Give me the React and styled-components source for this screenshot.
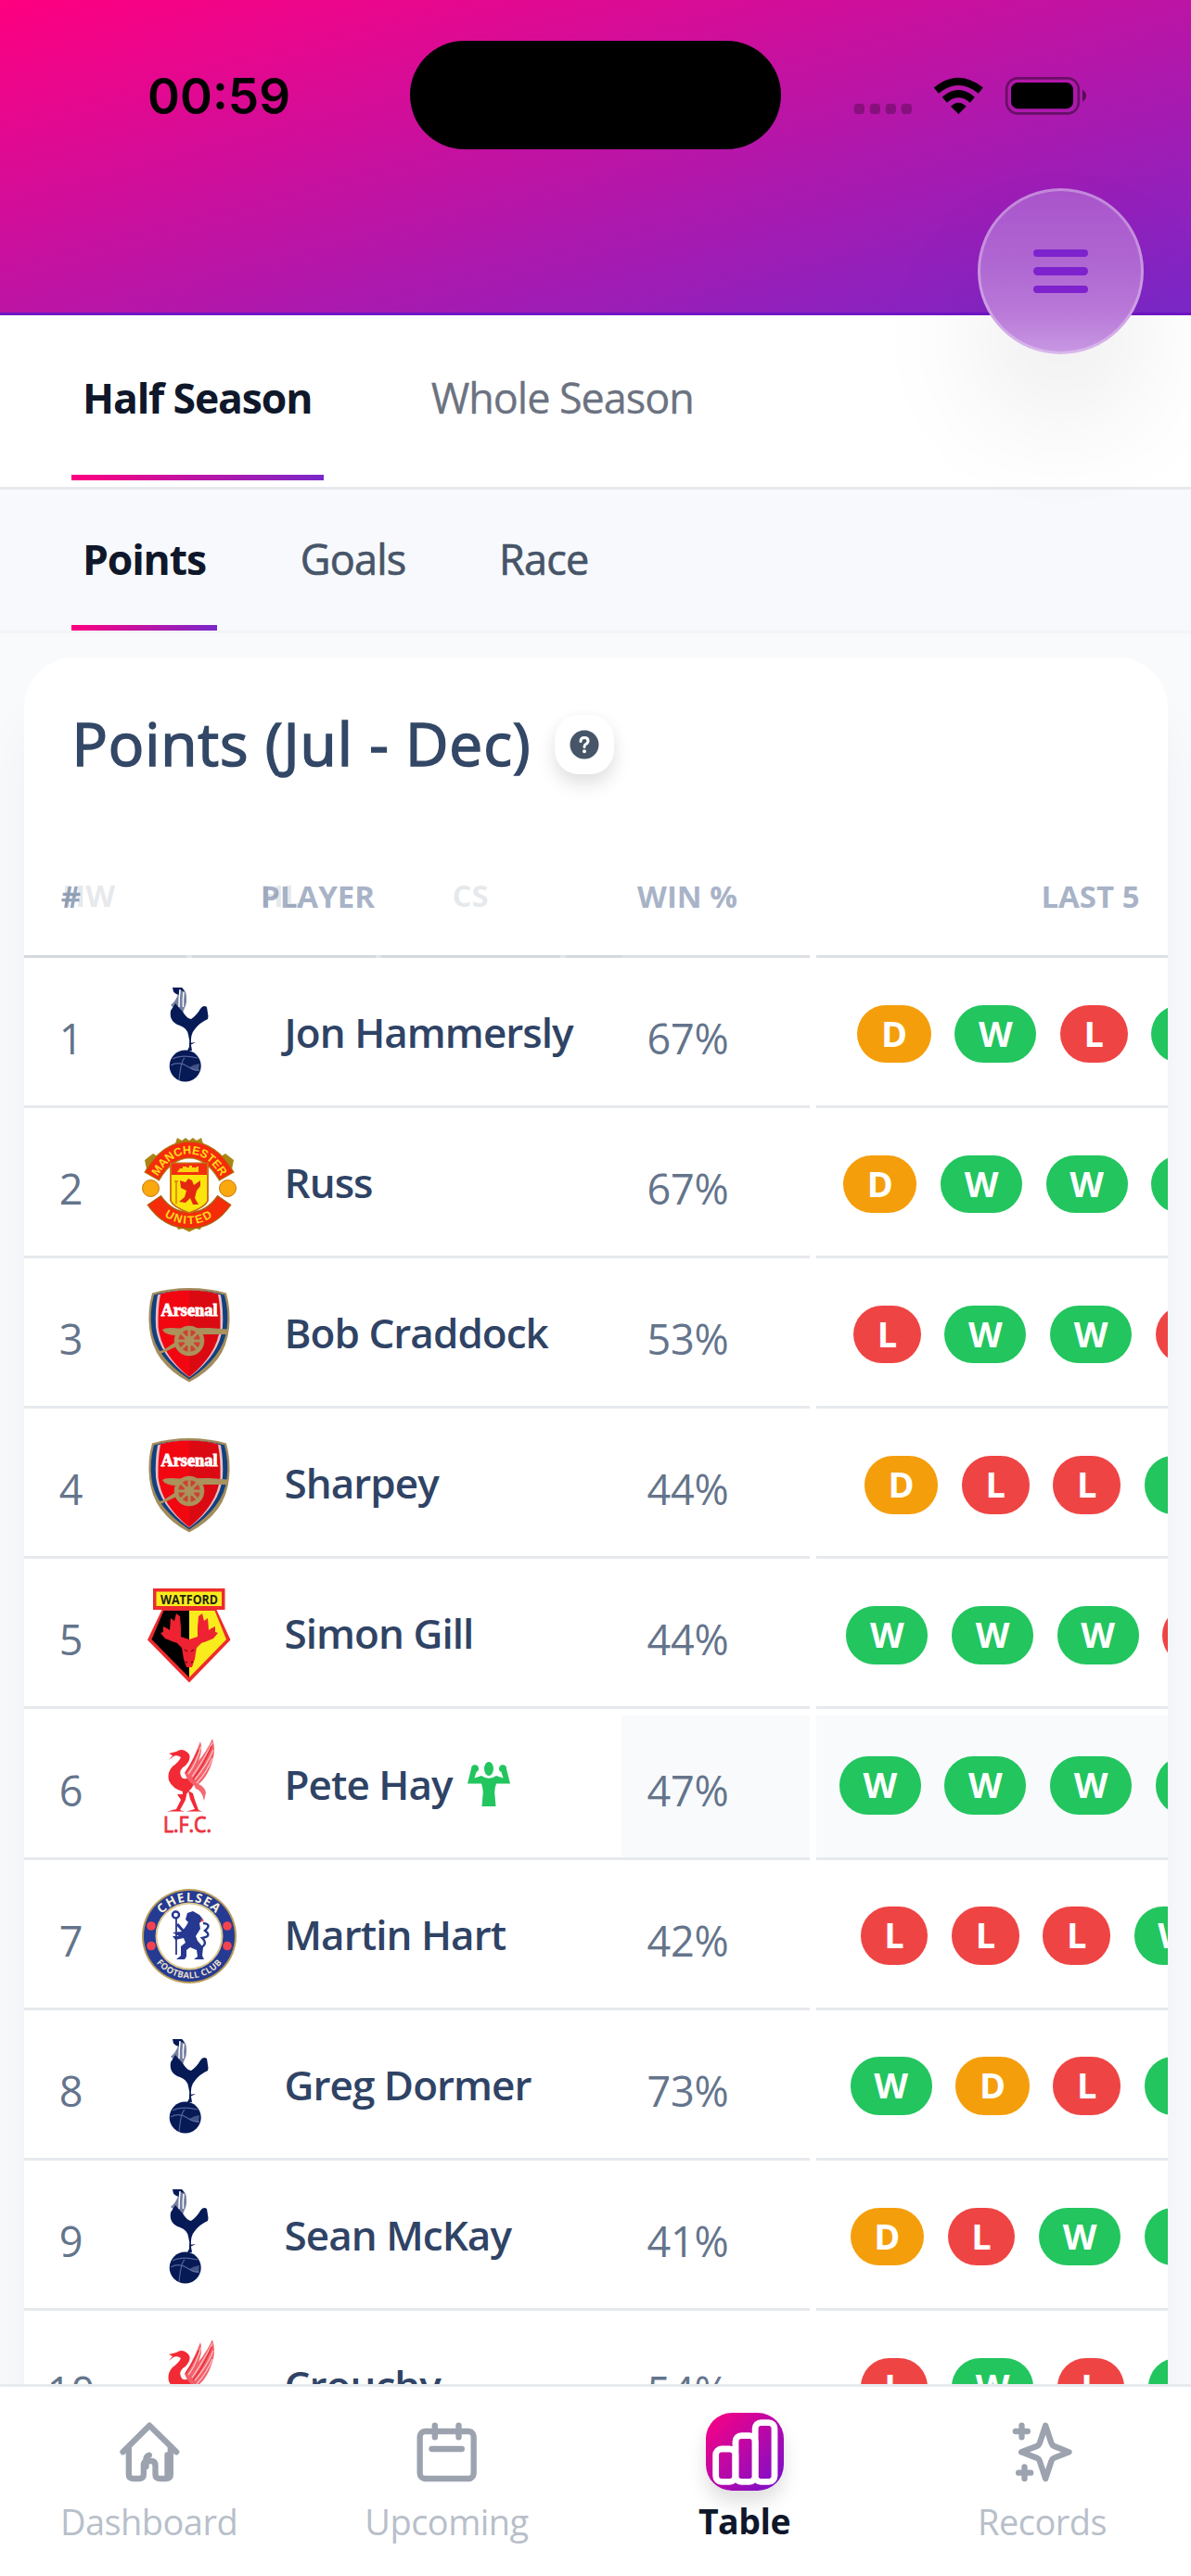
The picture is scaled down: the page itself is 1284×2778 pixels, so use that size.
import React from "react";
import styled, { createGlobalStyle, css } from "styled-components";

const GlobalStyle = createGlobalStyle`
  *, *::before, *::after { box-sizing: border-box; }
  body {
    margin: 0;
    background: #f8fafc;
    font-family: "Open Sans", "Noto Sans", sans-serif;
    -webkit-font-smoothing: antialiased;
  }
`;

const Screen = styled.div`
  width: 1284px;
  height: 2778px;
  display: flex;
  flex-direction: column;
  overflow: hidden;
  position: relative;
  background: #f8fafc;
`;

/* ---------- header ---------- */

const Header = styled.header`
  height: 340px;
  flex: none;
  border-bottom: 3px solid #7016c6;
  background: linear-gradient(to bottom right, #ff0080, #7928ca) border-box;
  position: relative;
  z-index: 3;
`;

const StatusBar = styled.div`
  display: grid;
  grid-template-columns: 442px 400px 442px;
  grid-template-rows: 117px;
  padding-top: 44px;
  height: 161px;
`;

const Clock = styled.div`
  padding-left: 159px;
  font: 600 53px/120px Inter, sans-serif;
  color: #000;
`;

const Island = styled.div`
  background: #000;
  border-radius: 59px;
`;

const StatusIcons = styled.svg`
  width: 300px;
  height: 90px;
  margin: 16px 0 0 58px;
`;

const MenuButton = styled.button`
  position: absolute;
  top: 203px;
  right: 51px;
  width: 179px;
  height: 179px;
  padding: 0;
  border-radius: 50%;
  border: 3px solid rgba(255, 255, 255, 0.3);
  background: linear-gradient(#a953cb 0%, #b068d2 48%, #ba7ad9 76%, #c899e3 100%) border-box;
  box-shadow: 0 72px 130px rgba(0, 0, 0, 0.08);
  display: flex;
  flex-direction: column;
  align-items: center;
  justify-content: center;
  gap: 11px;
`;

const MenuLine = styled.span`
  width: 59px;
  height: 8.4px;
  border-radius: 5px;
  background: #7e22ce;
`;

/* ---------- tabs ---------- */

const TabBar = styled.nav`
  flex: none;
  display: flex;
  align-items: flex-start;
  padding-left: 77px;
  ${(p) =>
    p.$sub
      ? css`
          height: 155.5px;
          gap: 77.5px;
          background: #f8f9fc;
          border-bottom: 3px solid #f2f4f6;
        `
      : css`
          height: 187.5px;
          gap: 104px;
          background: #fff;
          border-bottom: 3px solid #e7e9ec;
        `}
`;

const Tab = styled.a`
  display: flex;
  align-items: center;
  padding: 4px ${(p) => (p.$active ? 12.5 : 11)}px 0 12px;
  height: ${(p) => (p.$sub ? 152.5 : 178)}px;
  border-bottom: 6px solid transparent;
  font-size: ${(p) => (p.$active ? 44.5 : 45)}px;
  font-weight: ${(p) => (p.$active ? 700 : 400)};
  letter-spacing: ${(p) => (p.$active ? -1.15 : p.$sub ? -0.8 : -1.05)}px;
  color: ${(p) => (p.$active ? "#0f172a" : p.$sub ? "#475569" : "#6b7280")};
  -webkit-text-stroke: ${(p) => (p.$active ? 0 : p.$sub ? 0.7 : 0.3)}px currentColor;
  ${(p) =>
    p.$active &&
    css`
      border-image: linear-gradient(to right, #ff0080, #7928ca) 0 0 1 0;
      border-width: 0 0 6px;
    `}
`;

/* ---------- card ---------- */

const Main = styled.main`
  flex: 1;
  min-height: 0;
  overflow: hidden;
  padding: 26px 25.5px 0;
`;

const Card = styled.section`
  height: 2000px;
  overflow: hidden;
  border-radius: 54px;
  background: #fff;
  box-shadow: 0 60px 60px rgba(30, 41, 59, 0.045);
`;

const CardHead = styled.div`
  height: 194px;
  display: flex;
  align-items: flex-start;
  padding: 62px 0 0 52px;
  gap: 26px;
`;

const CardTitle = styled.h2`
  margin: -1px 0 0;
  font-size: 64px;
  line-height: 64px;
  font-weight: 400;
  letter-spacing: 0.85px;
  color: #334766;
  -webkit-text-stroke: 1.6px #334766;
`;

const HelpButton = styled.button`
  width: 64px;
  height: 64px;
  padding: 0;
  border: 0;
  border-radius: 26px;
  background: #fff;
  box-shadow: 0 12px 20px rgba(0, 0, 0, 0.1), 0 2px 16px rgba(0, 0, 0, 0.04);
  display: flex;
  align-items: center;
  justify-content: center;
`;

const gridColumns = css`
  display: grid;
  grid-template-columns: 102px 155px 387.5px 203px 594.5px;
  column-gap: 0;
`;

const HeadRow = styled.div`
  ${gridColumns}
  height: 130px;
  position: relative;
  font-size: 33px;
  font-weight: 700;
  color: #a8b3c7;
`;

const HeadCell = styled.div`
  display: flex;
  align-items: center;
  justify-content: ${(p) => p.$align || "center"};
  padding: 0 ${(p) => p.$right || 0}px 1px ${(p) => p.$left || 0}px;
  margin-left: ${(p) => p.$gap || 0}px;
  border-bottom: 3px solid ${(p) => p.$line || "#d5d9dd"};
`;

const PlayerLabel = styled.span`
  margin-left: -1.5px;
`;

const RankHash = styled.span`
  color: #98a5bb;
`;

const GhostLabel = styled.span`
  position: absolute;
  top: 39px;
  left: ${(p) => p.$x}px;
  width: 120px;
  line-height: 48px;
  text-align: center;
  color: rgba(100, 116, 139, 0.17);
`;

const GhostGap = styled.span`
  position: absolute;
  bottom: 0;
  left: ${(p) => p.$x}px;
  width: 6px;
  height: 3px;
  background: #e2e5e8;
`;

const Row = styled.div`
  ${gridColumns}
  height: 162.1px;
`;

const Cell = styled.div`
  display: flex;
  align-items: center;
  border-bottom: 3px solid #e6e9ed;
`;

const Rank = styled(Cell)`
  justify-content: center;
  padding-top: 14px;
  font-size: 45px;
  color: #64748b;
`;

const CrestCell = styled(Cell)`
  padding: 6px 0 0 25.5px;
`;

const Crest = styled.svg`
  width: 102px;
  height: 102px;
  flex: none;
`;

const Name = styled(Cell)`
  padding: 1px 0 0 24px;
  gap: 16px;
  font-size: 44px;
  font-weight: 600;
  letter-spacing: -0.95px;
  white-space: nowrap;
  color: #2f4365;
`;

const highlight = css`
  background: #f8fafc;
  box-shadow: inset 0 7px 0 #fff;
`;

const WinRate = styled(Cell)`
  justify-content: center;
  padding: 14px 60px 0 0;
  font-size: 45px;
  letter-spacing: -0.3px;
  color: #64748b;
  ${(p) => p.$active && highlight}
`;

const Form = styled(Cell)`
  justify-content: center;
  gap: 25.7px;
  margin-left: 6.5px;
  padding: 5px 0 0 5px;
  ${(p) => p.$active && highlight}
`;

const pillColor = { W: "#22c55e", D: "#f59e0b", L: "#ef4444" };

const Pill = styled.span`
  height: 62.5px;
  padding: 0 25.6px;
  border-radius: 31px;
  background: ${(p) => pillColor[p.$result]};
  color: #fff;
  font-size: 38px;
  font-weight: 700;
  line-height: 60px;
`;

/* ---------- bottom nav ---------- */

const BottomNav = styled.nav`
  flex: none;
  height: 207px;
  display: grid;
  grid-template-columns: repeat(4, 1fr);
  border-top: 3px solid #e7eaee;
  background: #fff;
  position: relative;
`;

const NavItem = styled.a`
  display: flex;
  flex-direction: column;
  align-items: center;
  padding-top: 28px;
  gap: 7.5px;
  font-size: ${(p) => (p.$active ? 37.5 : 38)}px;
  letter-spacing: ${(p) => (p.$active ? -0.5 : -0.55)}px;
  line-height: 50px;
  font-weight: ${(p) => (p.$active ? 700 : 400)};
  color: ${(p) => (p.$active ? "#0f172a" : "#b8bfca")};
`;

const NavIcon = styled.svg`
  width: 84px;
  height: 84px;
  fill: none;
  stroke: #9ca3af;
  stroke-width: 19;
  stroke-linecap: round;
  stroke-linejoin: round;
  ${(p) =>
    p.$active &&
    css`
      stroke: #fff;
      stroke-width: 20.5;
      border-radius: 28px;
      background: linear-gradient(135deg, #ff0080, #7210cf);
      box-shadow: 0 12px 20px rgba(0, 0, 0, 0.13);
    `}
`;

/* ---------- crests ---------- */

const Spurs = () => (
  <Crest viewBox="0 0 102 102">
    <g fill="#061a56">
      <path d="M33 0 L43 0 Q48 4 48 10 Q48.500 18 46 22 L44 27 L36 23 L31 19 Q37 14 39 7 L34 5 L37 3Z" opacity=".55" />
      <path d="M33 0 L43 0 L46 4 L41 3 L40 8 L37 7 L34 4.500Z" />
      <path d="M36 17 L31 25 Q29 37 41 41 Q49 44 50 51 Q52 57 51 64 L49 68 H54 L53 62 Q52 50 57 45 Q62 38 71 34 L71.500 31 L70 21 Q66 18 63 23 Q59 30 53 34 Q48 33 44 26 Q40 22 36 17Z" />
      <path d="M51 60 L58 59 L52 62 Z" />
      <circle cx="46.700" cy="84.500" r="17" />
    </g>
    <path d="M41 2 Q40 11 40 21 M45 5 Q44 13 44.500 21" stroke="#fff" strokeWidth="1.500" fill="none" />
    <path d="M33 77 Q43 72 60 76 M31 84 Q40 79 49 85 Q56 90 62 89 M46 76 Q42 79 40 100" stroke="#56649a" strokeWidth="1.200" fill="none" />
    <path d="M51 86 Q56 83 62 82 L61 90 Q56 90 51 86Z" fill="#6d7aa8" opacity=".6" />
  </Crest>
);

const United = () => (
  <Crest viewBox="0 0 102 102">
    <defs>
      <path id="mu-top" d="M15 45 Q30 17.500 51 17.500 Q72 17.500 87 45" />
      <path id="mu-bottom" d="M17 78 Q32 93 51 93 Q70 93 85 78" />
    </defs>
    <g fill="#a98613">
      <path d="M36 6 L38 0 L43 3 L47 0 L51 3 L55 0 L59 3 L64 0 L66 6 L51 12Z" />
      <path d="M3 24 L12 17 L20 22 L10 37 L5 34Z M99 24 L90 17 L82 22 L92 37 L97 34Z" />
      <path d="M37 94 L39 99 L44 98 L51 101.500 L58 98 L63 99 L65 94Z" />
    </g>
    <circle cx="9.500" cy="54.500" r="9" fill="#f9a80e" stroke="#c9790c" strokeWidth="1" />
    <circle cx="92.500" cy="54.500" r="9" fill="#f9a80e" stroke="#c9790c" strokeWidth="1" />
    <path d="M10.500 42 Q27 13 51 13 Q75 13 91.500 42" fill="none" stroke="#b0760f" strokeWidth="19" />
    <path d="M11 41 Q27 13 51 13 Q75 13 91 41" fill="none" stroke="#f52c0a" strokeWidth="16.500" />
    <path d="M13 67 Q28 89 51 89 Q74 89 89 67" fill="none" stroke="#a8660f" strokeWidth="18.500" />
    <path d="M13.500 68 Q28 89 51 89 Q74 89 88.500 68" fill="none" stroke="#f52c0a" strokeWidth="16" />
    <path d="M31 27.500 H71 V68 Q68 75 51 81 Q34 75 31 68Z" fill="#fbe50c" stroke="#c86a12" strokeWidth="1.800" />
    <path d="M32 28 H70 V40 H32Z" fill="#f2300f" />
    <path d="M38 37 L41 33 H44 V31 H48 V32 H51 V30 H54 V32 H59 V31 H61 V37Z" fill="#fcd40c" />
    <path d="M41 46 L47 48 L50 44 L54 46 L56 51 L63 46 L63 52 L59 57 L57 65 L61 72 L55 72 L52 65 L47 70 L40 69 L46 64 L48 57 L42 54Z" fill="#e4280f" />
    <path d="M37 47 V71 M35 47 L39 47" stroke="#dc7a0d" strokeWidth="1.500" />
    <text fill="#ffdc1a" fontSize="12.500" fontWeight="700" fontFamily="Liberation Sans, sans-serif">
      <textPath href="#mu-top" startOffset="50%" textAnchor="middle">MANCHESTER</textPath>
    </text>
    <text fill="#ffdc1a" fontSize="12.500" fontWeight="700" fontFamily="Liberation Sans, sans-serif" letterSpacing="1.800">
      <textPath href="#mu-bottom" startOffset="50%" textAnchor="middle">UNITED</textPath>
    </text>
  </Crest>
);

const Arsenal = () => (
  <Crest viewBox="0 0 102 102">
    <path d="M11 5.500 Q30 0 51 0 Q72 0 91 5.500 Q96 24 94 43 Q92 62 82 76 Q70 92 51 101.500 Q32 92 20 76 Q10 62 8 43 Q6 24 11 5.500Z" fill="#a38c5a" />
    <path d="M13 7.500 Q30 2.500 51 2.500 Q72 2.500 89 7.500 Q94 26 91.500 44 Q88 74 51 98.500 Q14 74 10.500 44 Q8 26 13 7.500Z" fill="#12407f" />
    <path d="M17 7.500 Q33 2.500 51 2.500 Q69 2.500 85 7.500 Q88 24 87 42 Q84 72 51 96.500 Q18 72 15 42 Q14 24 17 7.500Z" fill="#e6c0c6" />
    <path d="M20 6.500 Q34 2.500 51 2.500 V96 Q21 72 17.500 42 Q17 22 20 6.500Z" fill="#f20711" />
    <path d="M82 6.500 Q68 2.500 51 2.500 V96 Q81 72 84.500 42 Q85 22 82 6.500Z" fill="#db0a12" />
    <text x="51" y="30" fill="#fff" fontSize="18.500" fontWeight="700" fontFamily="Liberation Serif, serif" textAnchor="middle" textLength="61" lengthAdjust="spacingAndGlyphs" stroke="#fff" strokeWidth=".9">Arsenal</text>
    <g fill="#ab915c">
      <path d="M22 45 Q25 42 40 43.500 L72 43 L92 44.500 V49.500 L70 50 L38 51 Q25 51 22 45Z" />
      <path d="M23 67 L41 55 L44 60 L20 71 L15 69Z" />
      <path d="M65 50 H92 V48 H60Z" />
    </g>
    <circle cx="51" cy="57" r="14" fill="#c8442f" stroke="#ab915c" strokeWidth="4.500" />
    <path d="M51 43 V71 M37 57 H65 M41 47 L61 67 M61 47 L41 67" stroke="#ab915c" strokeWidth="3" />
    <circle cx="51" cy="57" r="5.500" fill="#ab915c" />
  </Crest>
);

const Watford = () => (
  <Crest viewBox="0 0 102 102">
    <path d="M22 22 H80 L95.500 55.500 L51 101.500 L6 55.500Z" fill="#ee2b2e" />
    <path d="M23.500 24 H51 V96 L10.500 55Z" fill="#000" />
    <path d="M78.500 24 H51 V96 L91 55Z" fill="#f8ec1c" />
    <path d="M12 0 H89.500 V23 H12Z" fill="#ee2b2e" />
    <path d="M15.500 3.500 H86 V19 H15.500Z" fill="#f8ec1c" />
    <text x="51" y="16.500" fill="#26220a" fontSize="13.500" fontWeight="700" fontFamily="Open Sans, sans-serif" textAnchor="middle" textLength="62" lengthAdjust="spacingAndGlyphs">WATFORD</text>
    <path d="M51 62 L44 60 L35 58 L25 54 L20 48 L23 47 L23 41 L27 43 L30 45 L31 32 L35 35 L37 27 L41 30 L42 42 L42 52 L51 55 L60 52 L60 42 L61 30 L65 27 L67 35 L71 32 L72 45 L75 43 L79 41 L79 47 L82 48 L77 54 L67 58 L58 60Z" fill="#ee2230" />
    <path d="M37 58 L46 55 H56 L65 58 L59 64 L57 76 L54 85 H48 L45 76 L43 64Z" fill="#ee2230" />
    <path d="M46 66 L49 68 M56 66 L53 68 M47 79 L49 80 M55 79 L53 80" stroke="#7a0a10" strokeWidth="1.500" />
  </Crest>
);

const Liverpool = () => (
  <Crest viewBox="0 0 102 102">
    <g fill="#f22a35">
      <path d="M37 14 Q43 10 48 14 Q53 17 51 23 Q49 28 44 31 Q39 36 43 42 Q47 45 53 41 Q58 33 64 28 Q62 38 57 45 Q56 52 51 56 L48 60 L47 64 H44 L44 57 Q33 54 29 45 Q27 36 33 30 Q40 25 42 20 Q38 17 34 19 L29 23 L33 18 L29 16 L33 15Z" />
      <path d="M38 60 L48 60 L47 66 L41 77 L46 78.500 H27 L37 76 L42 66Z" />
      <path d="M50 56 L55 59 L57 66 L61 77 L65 78.500 H48 L57 76 L52 65Z" />
      <path d="M55 47 Q68 50 69 58 L67 67 Q65 56 58 54Z" opacity=".7" />
    </g>
    <path d="M46 37 Q56 22 63 3 Q66 12 61 24 Q69 15 76 0 Q80 12 76 24 Q70 44 58 51 Q50 48 46 37Z" fill="#f4606a" />
    <path d="M50 38 Q58 28 64 8 M54 41 Q66 24 76 4 M57 44 Q70 29 77 12 M59 48 Q70 36 76 21" fill="none" stroke="#fbc3c7" strokeWidth="1.300" />
    <path d="M47 37 Q55 26 61 12 M55 44 Q66 30 75 8" fill="none" stroke="#ee2733" strokeWidth="1.300" />
    <text x="49" y="101" fill="#ec3540" fontSize="23.500" fontWeight="400" fontFamily="Open Sans, sans-serif" textAnchor="middle" textLength="52" lengthAdjust="spacingAndGlyphs" stroke="#ec3540" strokeWidth="1">L.F.C.</text>
  </Crest>
);

const Chelsea = () => (
  <Crest viewBox="0 0 102 102">
    <defs>
      <path id="che-top" d="M13.500 51 A37.500 37.500 0 0 1 88.500 51" />
      <path id="che-bottom" d="M5.500 51 A45.500 45.500 0 0 0 96.500 51" />
    </defs>
    <circle cx="51" cy="51" r="51" fill="#b99c5a" />
    <circle cx="51" cy="51" r="49" fill="#253a92" />
    <circle cx="51" cy="51" r="36.500" fill="#d9c58b" />
    <circle cx="51" cy="51" r="34.500" fill="#fff" />
    <g fill="#f3434f">
      <circle cx="10" cy="40" r="4.800" /><circle cx="10" cy="61.500" r="4.800" />
      <circle cx="92" cy="40" r="4.800" /><circle cx="92" cy="61.500" r="4.800" />
    </g>
    <g fill="#26388f">
      <path d="M49 26 L55 24 L62 28 L66 33 L62 37 L63 43 L58 51 L60 56 L66 63 L65 72 L67 76 H56 L60 73 L59 66 L52 63 L48 66 L48 73 L46 76 H37 L42 72 L42 62 L47 58 L45 53 L36 55 L33 51 L40 51 L33 47 L43 46 L47 41 L50 36 L47 33Z" />
    </g>
    <g fill="none" stroke="#26388f">
      <circle cx="36.500" cy="28" r="3.500" strokeWidth="2.500" />
      <path d="M37 31 L37 71" strokeWidth="1.800" />
      <path d="M38 38 L45 46" strokeWidth="3" />
      <path d="M62 64 Q72 60 65 53 Q76 51 68 45 Q76 38 66 37" strokeWidth="2.400" />
    </g>
    <circle cx="65" cy="34" r="1.500" fill="#f3434f" />
    <text fill="#fbf3dc" fontSize="13.500" fontWeight="700" fontFamily="Open Sans, sans-serif" letterSpacing="1.200">
      <textPath href="#che-top" startOffset="50%" textAnchor="middle">CHELSEA</textPath>
    </text>
    <text fill="#e6dfc8" fontSize="9.500" fontWeight="700" fontFamily="Open Sans, sans-serif" letterSpacing=".3">
      <textPath href="#che-bottom" startOffset="50%" textAnchor="middle">FOOTBALL CLUB</textPath>
    </text>
  </Crest>
);

const Flex = () => (
  <svg width="46" height="48" viewBox="0 0 46 48" fill="#22c55e">
    <ellipse cx="23" cy="7.500" rx="5" ry="7.500" />
    <path d="M0 23.500 L4 7.500 A4 4 0 1 1 9.500 11 L7.500 17.500 L15 15 Q23 20.500 31 15 L38.500 17.500 L36.500 11 A4 4 0 1 1 42 7.500 L46 23.500 L31 23.500 Q29 29 29.300 34 L30.500 48 H15.500 L16.700 34 Q17 29 15 23.500Z" />
  </svg>
);

const players = [
  { name: "Jon Hammersly", crest: Spurs, win: 67, form: "DWLWL" },
  { name: "Russ", crest: United, win: 67, form: "DWWWW" },
  { name: "Bob Craddock", crest: Arsenal, win: 53, form: "LWWLW" },
  { name: "Sharpey", crest: Arsenal, win: 44, form: "DLLWL" },
  { name: "Simon Gill", crest: Watford, win: 44, form: "WWWLW" },
  { name: "Pete Hay", crest: Liverpool, win: 47, form: "WWWWW", active: true },
  { name: "Martin Hart", crest: Chelsea, win: 42, form: "LLLWW" },
  { name: "Greg Dormer", crest: Spurs, win: 73, form: "WDLWW" },
  { name: "Sean McKay", crest: Spurs, win: 41, form: "DLWWW" },
  { name: "Crouchy", crest: Liverpool, win: 54, form: "LWLWL" },
];

export default function App() {
  return (
    <Screen>
      <GlobalStyle />
      <Header>
        <StatusBar>
          <Clock>00:59</Clock>
          <Island />
          <StatusIcons viewBox="0 0 900 270">
            <g fill="#000" opacity=".25">
              <rect x="62" y="155" width="34" height="34" rx="12" />
              <rect x="113" y="155" width="34" height="34" rx="12" />
              <rect x="164" y="155" width="34" height="34" rx="12" />
              <rect x="215" y="155" width="34" height="34" rx="12" />
            </g>
            <g fill="none" stroke="#000" strokeWidth="24">
              <path d="M328 113 Q400 54 472 113" />
              <path d="M355 143 Q400 104 445 143" />
            </g>
            <path d="M375 164 Q400 140 425 164 L400 189Z" />
            <rect x="555.500" y="73" width="233" height="114" rx="36" fill="none" stroke="#000" strokeOpacity=".4" strokeWidth="8" />
            <rect x="570" y="87" width="201" height="85" rx="23" />
            <path d="M801 110 Q813 118 813 129.500 Q813 141 801 149Z" fillOpacity=".5" />
          </StatusIcons>
        </StatusBar>
        <MenuButton aria-label="Menu">
          <MenuLine />
          <MenuLine />
          <MenuLine />
        </MenuButton>
      </Header>

      <TabBar>
        <Tab $active>Half Season</Tab>
        <Tab>Whole Season</Tab>
      </TabBar>
      <TabBar $sub>
        <Tab $sub $active>Points</Tab>
        <Tab $sub>Goals</Tab>
        <Tab $sub>Race</Tab>
      </TabBar>

      <Main>
        <Card>
          <CardHead>
            <CardTitle>Points (Jul - Dec)</CardTitle>
            <HelpButton aria-label="Help">
              <svg width="32" height="32" viewBox="0 0 32 32">
                <circle cx="16" cy="16" r="15.500" fill="#475569" />
                <path d="M12 12.500 Q12 8.500 16 8.500 Q20 8.500 20 12 Q20 14.300 17.500 15.500 Q16 16.300 16 18.500" fill="none" stroke="#fff" strokeWidth="3" strokeLinecap="round" />
                <circle cx="16" cy="23.300" r="2" fill="#fff" />
              </svg>
            </HelpButton>
          </CardHead>
          <HeadRow>
            <HeadCell><RankHash>#</RankHash></HeadCell>
            <HeadCell />
            <HeadCell $align="flex-start"><PlayerLabel>PLAYER</PlayerLabel></HeadCell>
            <HeadCell $right={61} $line="#dde1e4">WIN %</HeadCell>
            <HeadCell $gap={6.5} $left={4} $line="#dde1e4">LAST 5</HeadCell>
            <GhostLabel $x={10}>HW</GhostLabel>
            <GhostLabel $x={217}>HL</GhostLabel>
            <GhostLabel $x={421.5}>CS</GhostLabel>
            <GhostGap $x={175.5} />
            <GhostGap $x={379.5} />
            <GhostGap $x={578.5} />
          </HeadRow>
          {players.map(({ name, crest: Badge, win, form, active }, i) => (
            <Row key={name}>
              <Rank>{i + 1}</Rank>
              <CrestCell><Badge /></CrestCell>
              <Name>
                {name}
                {active && <Flex />}
              </Name>
              <WinRate $active={active}>{win}%</WinRate>
              <Form $active={active}>
                {form.split("").map((r, k) => (
                  <Pill key={k} $result={r}>{r}</Pill>
                ))}
              </Form>
            </Row>
          ))}
        </Card>
      </Main>

      <BottomNav>
        <NavItem>
          <NavIcon viewBox="55.5 36 252 252">
            <path d="M96 163 L182 77 L269 163" />
            <path d="M115 147 V235 Q115 249 129 249 H149 Q163 249 163 235 V208 Q163 192 175 192 H188 Q201 192 201 208 V235 Q201 249 215 249 H236 Q250 249 250 235 V147" />
            <path d="M240 172 V240 M181 173 Q171 176 171 186 V210" />
          </NavIcon>
          Dashboard
        </NavItem>
        <NavItem>
          <NavIcon viewBox="1018.5 36 252 252">
            <rect x="1056.500" y="96" width="174" height="153" rx="17" />
            <path d="M1105 77 V115 M1182 77 V115 M1095 153 H1192" />
          </NavIcon>
          Upcoming
        </NavItem>
        <NavItem $active>
          <NavIcon $active viewBox="61.5 36 252 252">
            <rect x="93.500" y="153" width="63.500" height="106" rx="19" />
            <rect x="157.500" y="110" width="63.500" height="149" rx="19" />
            <rect x="221" y="68" width="62.500" height="191" rx="19" />
          </NavIcon>
          Table
        </NavItem>
        <NavItem>
          <NavIcon viewBox="1024.5 36 252 252">
            <path d="M1160 77 L1179 134 Q1181 141 1188 144 L1236 163 L1188 182 Q1181 185 1179 192 L1160 249 L1141 192 Q1139 185 1132 182 L1082 163 L1132 144 Q1139 141 1141 134 Z" />
            <path d="M1083 77 V115 M1063 96 H1102 M1092 211 V249 M1073 230 H1112" />
          </NavIcon>
          Records
        </NavItem>
      </BottomNav>
    </Screen>
  );
}
